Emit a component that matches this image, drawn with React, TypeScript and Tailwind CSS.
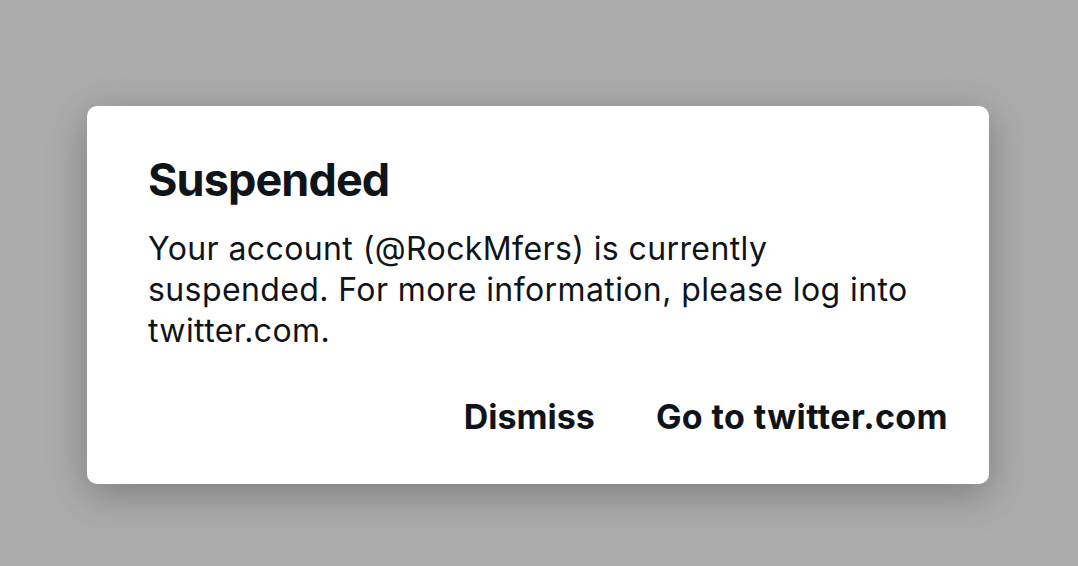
export default function App() {
  return (
    <div
      className="flex h-[566px] w-[1078px] items-start bg-[#acacac] pl-[87px] pt-[106px]"
      style={{ fontFamily: "Inter, 'Noto Sans', sans-serif" }}
    >
      <div className="flex h-[378px] w-[902px] flex-col rounded-[10px] bg-white pl-[61px] pr-[41px] pt-[48px] shadow-[0_10px_40px_rgba(0,0,0,0.28)]">
        <h1 className="text-[45px] font-bold leading-[52px] tracking-[-0.9px] text-[#0f1419]">
          Suspended
        </h1>
        <p className="mt-[22px] w-[790px] text-[32px] leading-[41px] tracking-[0.4px] text-[#0f1419]">
          Your account (@RockMfers) is currently suspended. For more information, please log into
          twitter.com.
        </p>
        <div className="mt-[46px] flex justify-end gap-[61px]">
          <button className="text-[34px] font-bold leading-[40px] text-[#0f1419]">Dismiss</button>
          <button className="text-[34px] font-bold leading-[40px] tracking-[0.4px] text-[#0f1419]">
            Go to twitter.com
          </button>
        </div>
      </div>
    </div>
  );
}
